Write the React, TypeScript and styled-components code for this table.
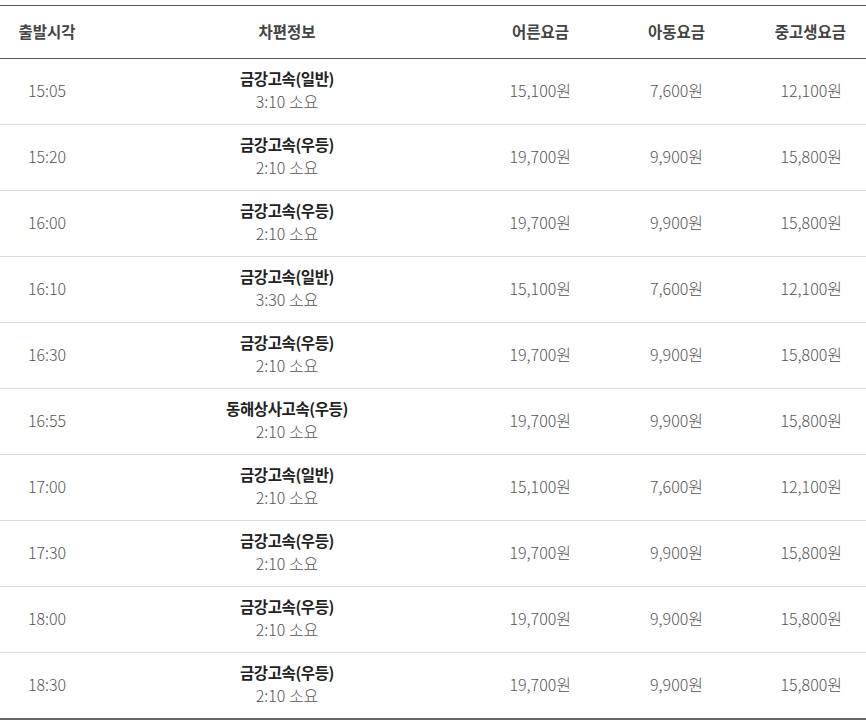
import React from 'react'
import styled, { createGlobalStyle } from 'styled-components'

interface Trip {
  time: string
  company: string
  grade: string
  duration: string
  adult: string
  child: string
  student: string
}

const trips: Trip[] = [
  { time: '15:05', company: '금강고속', grade: '일반', duration: '3:10', adult: '15,100', child: '7,600', student: '12,100' },
  { time: '15:20', company: '금강고속', grade: '우등', duration: '2:10', adult: '19,700', child: '9,900', student: '15,800' },
  { time: '16:00', company: '금강고속', grade: '우등', duration: '2:10', adult: '19,700', child: '9,900', student: '15,800' },
  { time: '16:10', company: '금강고속', grade: '일반', duration: '3:30', adult: '15,100', child: '7,600', student: '12,100' },
  { time: '16:30', company: '금강고속', grade: '우등', duration: '2:10', adult: '19,700', child: '9,900', student: '15,800' },
  { time: '16:55', company: '동해상사고속', grade: '우등', duration: '2:10', adult: '19,700', child: '9,900', student: '15,800' },
  { time: '17:00', company: '금강고속', grade: '일반', duration: '2:10', adult: '15,100', child: '7,600', student: '12,100' },
  { time: '17:30', company: '금강고속', grade: '우등', duration: '2:10', adult: '19,700', child: '9,900', student: '15,800' },
  { time: '18:00', company: '금강고속', grade: '우등', duration: '2:10', adult: '19,700', child: '9,900', student: '15,800' },
  { time: '18:30', company: '금강고속', grade: '우등', duration: '2:10', adult: '19,700', child: '9,900', student: '15,800' },
]

const GlobalStyle = createGlobalStyle`
  body {
    margin: 0;
    background: #fff;
    font-family: "Noto Sans CJK KR", "Noto Sans", sans-serif;
  }
`

const App: React.FC = () => {
  return (
    <>
      <GlobalStyle />
      <Wrapper>
        <Table>
          <colgroup>
            <col style={{ width: 94 }} />
            <col style={{ width: 386 }} />
            <col style={{ width: 115 }} />
            <col style={{ width: 132 }} />
            <col style={{ width: 139 }} />
          </colgroup>
          <thead>
            <tr>
              <HeadCell>출발시각</HeadCell>
              <HeadCell>차편정보</HeadCell>
              <HeadCell $right>어른요금</HeadCell>
              <HeadCell $right $pad={22}>아동요금</HeadCell>
              <HeadCell $right $pad={20}>중고생요금</HeadCell>
            </tr>
          </thead>
          <tbody>
            {trips.map((trip, i) => (
              <Row key={i} $last={i === trips.length - 1}>
                <Cell>{trip.time}</Cell>
                <Cell>
                  <Company>
                    {trip.company}({trip.grade})
                  </Company>
                  <Duration>{trip.duration} 소요</Duration>
                </Cell>
                <Cell $right>{trip.adult}원</Cell>
                <Cell $right>{trip.child}원</Cell>
                <Cell $right>{trip.student}원</Cell>
              </Row>
            ))}
          </tbody>
        </Table>
      </Wrapper>
    </>
  )
}

const Wrapper = styled.div`
  width: 866px;
  height: 728px;
  padding-top: 5px;
  box-sizing: border-box;
  overflow: hidden;
`

const Table = styled.table`
  width: 866px;
  border-collapse: collapse;
  table-layout: fixed;
  border-top: 1px solid #555;
  border-bottom: 2px solid #666;
`

const HeadCell = styled.th<{ $right?: boolean; $pad?: number }>`
  height: 50px;
  padding: 0 ${p => (p.$right ? (p.$pad ?? 26) : 0)}px 2px 0;
  text-align: ${p => (p.$right ? 'right' : 'center')};
  font-size: 15.5px;
  font-weight: 700;
  color: #444;
  border-bottom: 1px solid #555;
`

const Row = styled.tr<{ $last?: boolean }>`
  height: 66px;
  border-bottom: ${p => (p.$last ? 'none' : '1px solid #ddd')};
`

const Cell = styled.td<{ $right?: boolean }>`
  padding: 0 ${p => (p.$right ? 24 : 0)}px 3px 0;
  text-align: ${p => (p.$right ? 'right' : 'center')};
  vertical-align: middle;
  font-size: 16px;
  font-weight: 300;
  color: #555;
`

const Company = styled.div`
  font-size: 15.5px;
  font-weight: 700;
  color: #222;
  line-height: 23px;
  letter-spacing: -0.4px;
`

const Duration = styled.div`
  font-size: 16px;
  font-weight: 300;
  color: #555;
  line-height: 23px;
`

export default App
